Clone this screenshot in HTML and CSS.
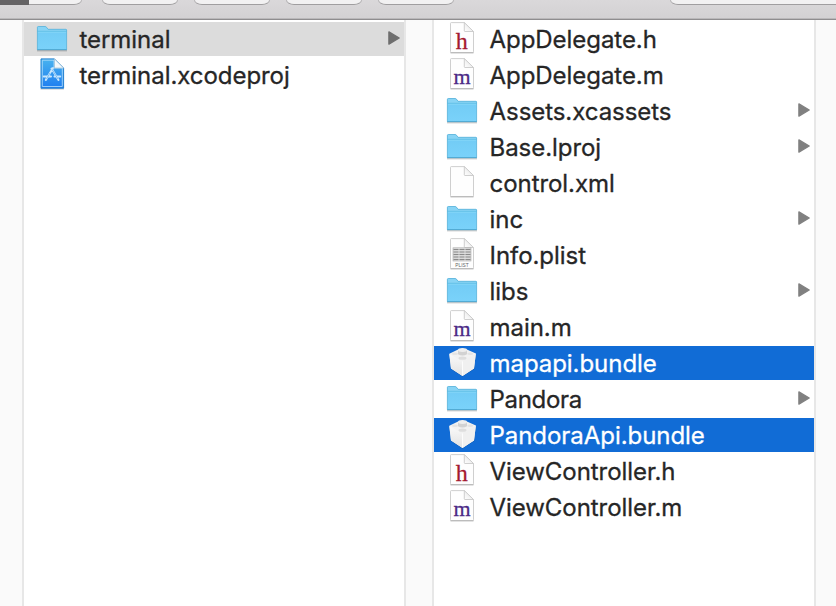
FILE: index.html
```
<!DOCTYPE html>
<html lang="en">
<head>
<meta charset="utf-8">
<title>Finder</title>
<link rel="stylesheet" href="styles.css">
</head>
<body>
<svg class="sprites" width="0" height="0" aria-hidden="true">
  <defs>
    <linearGradient id="blue" x1="0" y1="0" x2="0" y2="1"><stop offset="0" stop-color="#70caf4"/><stop offset="1" stop-color="#7ad2fa"/></linearGradient>
    <linearGradient id="xc" x1="0" y1="0" x2="0" y2="1"><stop offset="0" stop-color="#49b3ef"/><stop offset="1" stop-color="#1e7df0"/></linearGradient>
    <linearGradient id="fold" x1="0" y1="1" x2="1" y2="0"><stop offset="0" stop-color="#fff"/><stop offset="1" stop-color="#e0e0e0"/></linearGradient>
    <linearGradient id="bl" x1="0" y1="0" x2="0" y2="1"><stop offset="0" stop-color="#fafafa"/><stop offset="1" stop-color="#e2e2e2"/></linearGradient>
  </defs>
  <symbol id="folder" viewBox="0 0 34 34">
    <path d="M1 28.700H31" stroke="#000" stroke-opacity=".2" stroke-width="1.400"/>
    <path d="M1.300 27.900V5.500q0-1 1-1H9q1 0 1.600.8L12 7.300H29.900q.8 0 .8.8V27.900z" fill="url(#blue)"/>
    <path d="M1.300 9V5.500q0-1 1-1H9q1 0 1.600.8L12 7.300H29.900q.8 0 .8.8V9z" fill="#88d4f5"/>
    <path d="M1.300 9.300H30.700" stroke="#58b7e0" stroke-width=".8"/>
    <path d="M1.300 10.200H30.700" stroke="#8edcfb" stroke-width=".7"/>
    <path d="M1.400 27.600V5.500q0-1 1-1H9q1 0 1.600.8L12 7.300H29.800q.8 0 .8.8V27.600z" fill="none" stroke="#5bb2d9" stroke-width=".8"/>
    <path d="M1.200 27.600H30.800" stroke="#52a9d2"/>
  </symbol>
  <symbol id="page" viewBox="0 0 34 34">
    <path d="M4.500 31H27.500" stroke="#000" stroke-opacity=".22"/>
    <path d="M5.300 .6H18.300L27.500 9.600V29.700q0 .8-.8.8H5.300q-.8 0-.8-.8V1.400q0-.8.8-.8z" fill="#fefefe" stroke="#c9c9c9" stroke-width=".9"/>
    <path d="M18.300 .6V8.800q0 .7.7.7H27.500z" fill="url(#fold)" stroke="#c9c9c9" stroke-width=".9"/>
    <path d="M4.500 30.500H27.500" stroke="#b8b8b8" stroke-width=".8"/>
  </symbol>
  <symbol id="table" viewBox="0 0 34 34">
    <rect x="7" y="9.800" width="18" height="13.200" fill="#d8d8d8" stroke="#aaa" stroke-width=".6"/>
    <path d="M7.500 11.500H24.500M7.500 14H24.500M7.500 16.500H24.500M7.500 19H24.500M7.500 21.500H24.500" stroke="#8a8a8a" stroke-width="1"/>
    <path d="M13 10V23M19 10V23" stroke="#e4e4e4" stroke-width=".8"/>
  </symbol>
  <symbol id="xcode" viewBox="0 0 34 34">
    <path d="M4.500 30.900H28" stroke="#000" stroke-opacity=".3"/>
    <path d="M5 .9H18.500L27.600 10V30.200H5z" fill="url(#xc)" stroke="#2582cf"/>
    <path d="M6.300 2.200H18V10H26.300V28.500H6.300z" fill="none" stroke="#b8e0fb" stroke-width=".8"/>
    <path d="M18.500 .9V10H27.600z" fill="#f3f8fb" stroke="#a9c7d9" stroke-width=".8"/>
    <path d="M15.500 10.500L22.500 22M17 10L9.800 22M7.800 18.500H15M18.500 18.500H24.200" fill="none" stroke="#c9e7fd" stroke-width="2" stroke-linecap="round"/>
    <path d="M16.100 11.500L22 21M10.500 21L14 15" stroke="#54a7ef" stroke-width=".7"/>
  </symbol>
  <symbol id="bundle" viewBox="0 0 34 34">
    <path d="M3.300 8.200L11.500 4L16.500 2.500L21.500 4L29.900 8L28.300 23L16.500 30.500L5 23z" fill="#000" opacity=".18"/>
    <path d="M3.300 7.800L11.500 3.800L16.500 2.500L21.500 3.800L29.900 7.500L28 22.600L16.500 30L5 22.600z" fill="#f2f2f2"/>
    <path d="M3.300 7.900L16.500 15.400V30L5 22.600z" fill="url(#bl)"/>
    <path d="M29.900 7.600L16.500 15.400V30L28 22.600z" fill="#f0f0f0"/>
    <path d="M16.500 15.400V29.500" stroke="#fff" stroke-width=".8"/>
    <ellipse cx="16.500" cy="12.200" rx="4" ry="1.600" fill="#dedede"/>
    <path d="M12 4V8.200q4.500 2.500 9 0V4z" fill="#d2d2d2"/>
    <ellipse cx="16.500" cy="4" rx="4.500" ry="1.900" fill="#eee"/>
    <ellipse cx="9" cy="7.700" rx="3" ry="1.200" fill="#e4e4e4"/>
    <ellipse cx="24.200" cy="7.700" rx="3" ry="1.200" fill="#e4e4e4"/>
  </symbol>
  <symbol id="arrow" viewBox="0 0 12 14">
    <path d="M.9 .9L11.200 7L.9 13.100z" fill="currentColor" stroke="currentColor" stroke-width="1.300" stroke-linejoin="round"/>
  </symbol>
</svg>
<div class="window">
  <header class="toolbar">
    <div class="segments"><span class="segment-active"></span></div>
    <div class="button"></div><div class="button"></div><div class="button"></div><div class="button"></div>
    <div class="search"></div>
  </header>
  <main class="browser">
    <div class="gutter"></div>
    <ul class="column">
      <li class="row current"><svg class="icon"><use href="#folder"/></svg><span class="name">terminal</span><svg class="arrow"><use href="#arrow"/></svg></li>
      <li class="row"><svg class="icon"><use href="#xcode"/></svg><span class="name">terminal.xcodeproj</span></li>
    </ul>
    <div class="gutter middle"></div>
    <ul class="column">
      <li class="row"><svg class="icon"><use href="#page"/><text class="glyph glyph-h" x="15.700" y="27">h</text></svg><span class="name">AppDelegate.h</span></li>
      <li class="row"><svg class="icon"><use href="#page"/><text class="glyph glyph-m" x="16" y="26">m</text></svg><span class="name">AppDelegate.m</span></li>
      <li class="row"><svg class="icon"><use href="#folder"/></svg><span class="name">Assets.xcassets</span><svg class="arrow"><use href="#arrow"/></svg></li>
      <li class="row"><svg class="icon"><use href="#folder"/></svg><span class="name">Base.lproj</span><svg class="arrow"><use href="#arrow"/></svg></li>
      <li class="row"><svg class="icon"><use href="#page"/></svg><span class="name">control.xml</span></li>
      <li class="row"><svg class="icon"><use href="#folder"/></svg><span class="name">inc</span><svg class="arrow"><use href="#arrow"/></svg></li>
      <li class="row"><svg class="icon"><use href="#page"/><use href="#table"/><text class="plist-label" x="16" y="28.600">PLIST</text></svg><span class="name">Info.plist</span></li>
      <li class="row"><svg class="icon"><use href="#folder"/></svg><span class="name">libs</span><svg class="arrow"><use href="#arrow"/></svg></li>
      <li class="row"><svg class="icon"><use href="#page"/><text class="glyph glyph-m" x="16" y="26">m</text></svg><span class="name">main.m</span></li>
      <li class="row selected"><svg class="icon"><use href="#bundle"/></svg><span class="name">mapapi.bundle</span></li>
      <li class="row"><svg class="icon"><use href="#folder"/></svg><span class="name tight">Pandora</span><svg class="arrow"><use href="#arrow"/></svg></li>
      <li class="row selected"><svg class="icon"><use href="#bundle"/></svg><span class="name">PandoraApi.bundle</span></li>
      <li class="row"><svg class="icon"><use href="#page"/><text class="glyph glyph-h" x="15.700" y="27">h</text></svg><span class="name">ViewController.h</span></li>
      <li class="row"><svg class="icon"><use href="#page"/><text class="glyph glyph-m" x="16" y="26">m</text></svg><span class="name">ViewController.m</span></li>
    </ul>
    <div class="gutter last"></div>
  </main>
</div>
</body>
</html>
```
FILE: styles.css
```
* { box-sizing: border-box; }
body { margin: 0; background: #fff; font-family: Inter, "Liberation Sans", sans-serif; }
.sprites { display: block; height: 0; }
.window { display: flex; flex-direction: column; width: 836px; height: 606px; overflow: hidden; }
.toolbar { display: flex; align-items: flex-start; height: 20px; flex: none; background: linear-gradient(#dad8da, #d3d1d3); border-bottom: 1px solid #8f8d8f; box-shadow: inset 0 -1px #bab8ba; }
.segments, .button, .search { height: 5px; background: #f2f1f2; border: 1px solid #b5b3b5; border-top: 0; border-bottom-color: #a09ea0; border-radius: 0 0 8px 8px / 0 0 5px 5px; }
.segments { width: 82px; margin-right: 20px; border-left: 0; border-bottom-left-radius: 0; }
.segment-active { display: block; width: 29px; height: 5px; background: #656365; }
.button { width: 76px; margin-right: 16px; }
.search { flex: 1; margin-left: 200px; border-right: 0; border-bottom-right-radius: 0; }
.browser { display: flex; flex: 1; min-height: 0; }
.gutter { width: 24px; background: #fafafa; border-right: 2px solid #e7e7e7; }
.middle { width: 30px; border-left: 2px solid #e7e7e7; }
.last { width: 22px; border-left: 2px solid #e7e7e7; border-right: 0; }
.column { display: flex; flex-direction: column; gap: 2px; width: 380px; margin: 0; padding: 2px 0 0; list-style: none; background: #fff; }
.row { display: flex; align-items: center; height: 34px; padding: 0 4px 0 12px; color: #262626; }
.current { background: #dcdcdc; }
.selected { background: #116cd6; color: #fff; }
.icon { width: 34px; height: 34px; flex: none; margin-right: 9.5px; }
.name { flex: 1; padding-top: 2px; font-size: 24px; line-height: 32px; letter-spacing: -.05px; white-space: nowrap; -webkit-text-stroke: .3px currentColor; }
.tight { letter-spacing: -.3px; }
.arrow { width: 12px; height: 14px; margin-bottom: 2px; color: #808080; }
.current .arrow { color: #6e6e6e; }
.glyph { font-family: "Liberation Serif", serif; font-size: 22px; text-anchor: middle; stroke-width: .3px; }
.glyph-h { font-size: 24px; fill: #a51930; stroke: #a51930; }
.glyph-m { fill: #4c2a86; stroke: #4c2a86; }
.plist-label { font: 4.8px "Liberation Sans", sans-serif; text-anchor: middle; fill: #666; }
```
